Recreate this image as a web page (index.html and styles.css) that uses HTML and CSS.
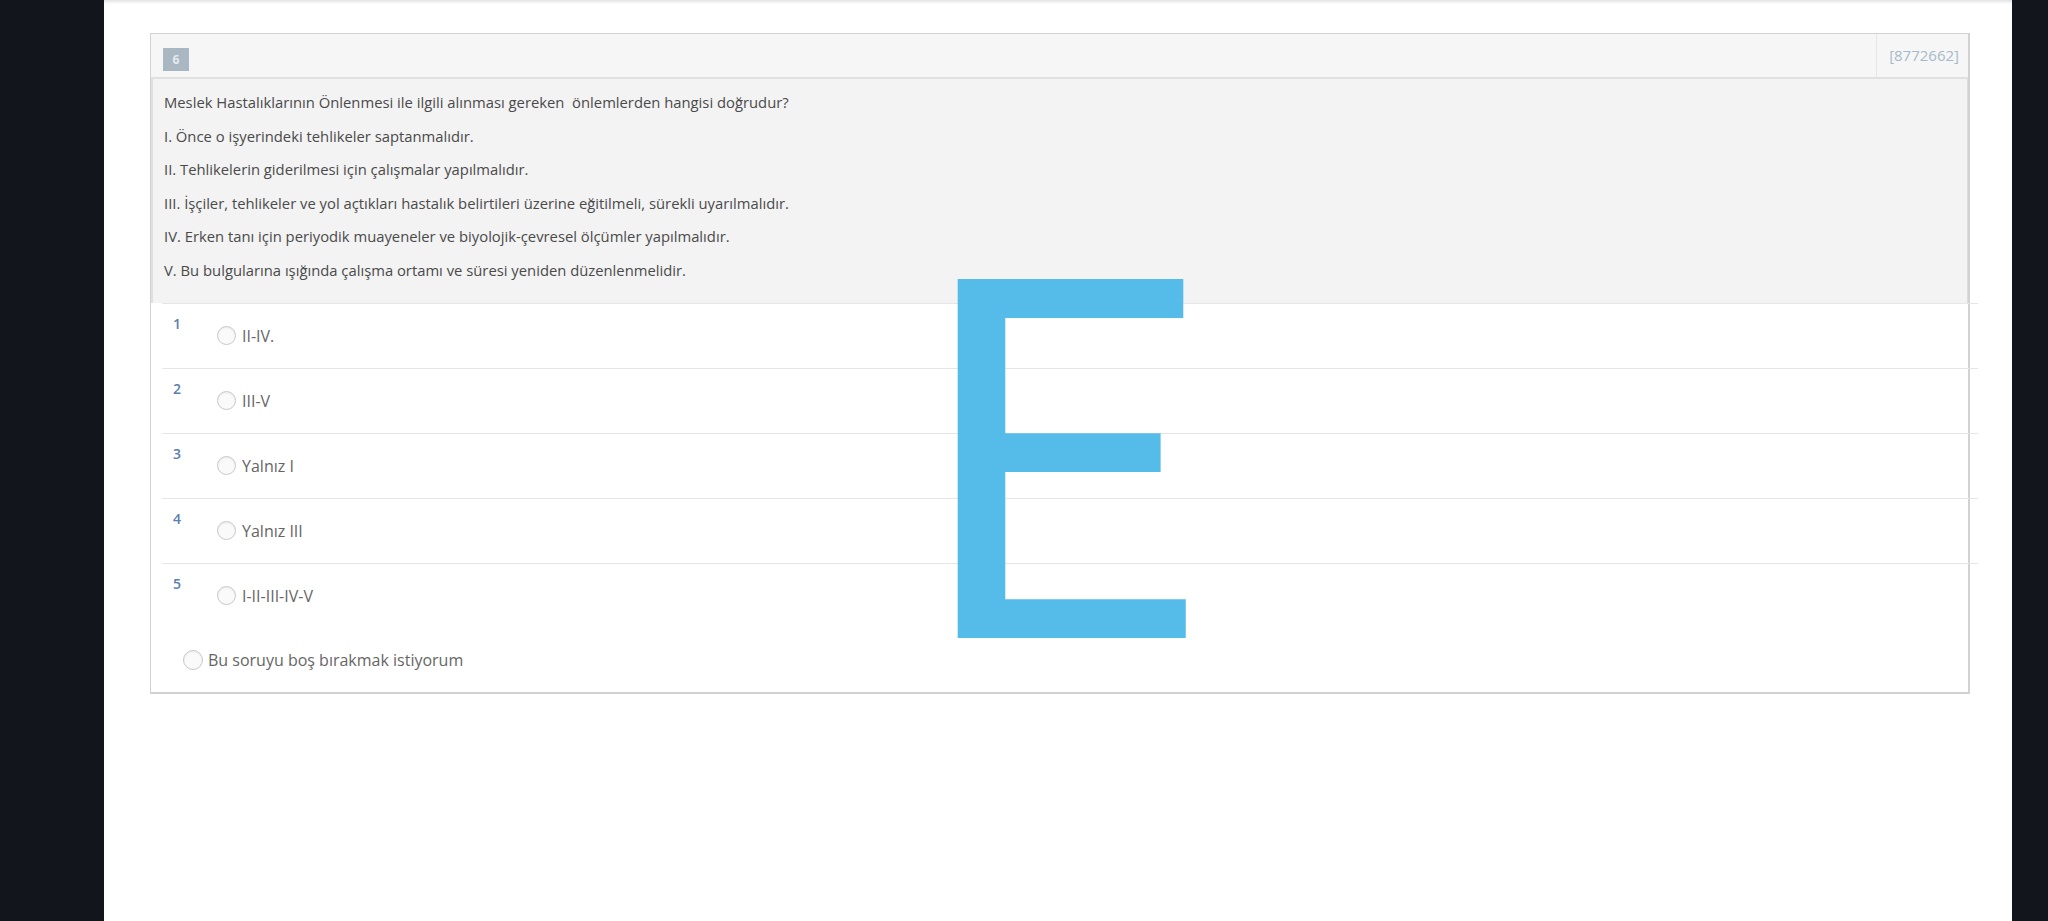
FILE: index.html
```html
<!DOCTYPE html>
<html lang="tr">
<head>
<meta charset="utf-8">
<title>Soru 6</title>
<link rel="stylesheet" href="styles.css">
</head>
<body>
<div class="frame">
  <aside class="side side-left"></aside>
  <main class="content">
    <section class="question-panel">
      <header class="q-head">
        <span class="q-badge">6</span>
        <span class="q-id">[8772662]</span>
      </header>
      <div class="q-body">
        <p>Meslek Hastalıklarının Önlenmesi ile ilgili alınması gereken &nbsp;önlemlerden hangisi doğrudur?</p>
        <p>I. Önce o işyerindeki tehlikeler saptanmalıdır.</p>
        <p>II. Tehlikelerin giderilmesi için çalışmalar yapılmalıdır.</p>
        <p>III. İşçiler, tehlikeler ve yol açtıkları hastalık belirtileri üzerine eğitilmeli, sürekli uyarılmalıdır.</p>
        <p>IV. Erken tanı için periyodik muayeneler ve biyolojik-çevresel ölçümler yapılmalıdır.</p>
        <p>V. Bu bulgularına ışığında çalışma ortamı ve süresi yeniden düzenlenmelidir.</p>
      </div>
      <ol class="options">
        <li class="opt"><span class="opt-num">1</span><label class="choice"><span class="radio"></span>II-IV.</label></li>
        <li class="opt"><span class="opt-num">2</span><label class="choice"><span class="radio"></span>III-V</label></li>
        <li class="opt"><span class="opt-num">3</span><label class="choice"><span class="radio"></span>Yalnız I</label></li>
        <li class="opt"><span class="opt-num">4</span><label class="choice"><span class="radio"></span>Yalnız III</label></li>
        <li class="opt"><span class="opt-num">5</span><label class="choice"><span class="radio"></span>I-II-III-IV-V</label></li>
      </ol>
      <label class="skip"><span class="radio radio-lg"></span>Bu soruyu boş bırakmak istiyorum</label>
    </section>
    <div class="answer-mark">E</div>
  </main>
  <aside class="side side-right"></aside>
</div>
</body>
</html>
```
FILE: styles.css
```css
* { box-sizing: border-box; }

html, body {
  margin: 0;
  padding: 0;
  height: 100%;
  background: #12151c;
}

body {
  font-family: "Open Sans", "Liberation Sans", sans-serif;
  color: #555;
}

.frame {
  display: flex;
  height: 921px;
}

.side { background: #12151c; }
.side-left { width: 104px; flex: 0 0 104px; }
.side-right { width: 36px; flex: 0 0 36px; }

.content {
  position: relative;
  flex: 1 1 auto;
  background: #fff;
  padding: 33px 42px 0 46px;
  background-image: linear-gradient(#e2e2e2, #fff 4px);
}

.question-panel {
  border: 1px solid #d2d2d2;
  border-width: 1px 2px 2px 1px;
  background: #fff;
}

.q-head {
  display: flex;
  justify-content: space-between;
  align-items: stretch;
  height: 45px;
  background: #f6f6f6;
  border-bottom: 2px solid #e0e0e0;
}

.q-badge {
  align-self: flex-start;
  margin: 14px 0 0 12px;
  width: 26px;
  height: 23px;
  background: #a9b7c2;
  color: #e4eaef;
  font-size: 12px;
  font-weight: 700;
  line-height: 23px;
  text-align: center;
}

.q-id {
  border-left: 1px solid #e6e6e6;
  padding: 0 9px 0 12px;
  color: #a6bacb;
  font-size: 15px;
  line-height: 43px;
}

.q-body {
  display: flex;
  flex-direction: column;
  gap: 13.6px;
  padding: 13px 12px 23px 11px;
  background: #f3f3f3;
  border-left: 2px solid #e0e0e0;
  border-right: 1px solid #dcdcdc;
  font-size: 14.8px;
  line-height: 20px;
  color: #4a4a4a;
}

.q-body p { margin: 0; }

.options {
  list-style: none;
  margin: 0 -10px 0 11px;
  padding: 0;
}

.opt {
  display: flex;
  align-items: flex-start;
  height: 65px;
  padding: 11px 0 0 11px;
  border-top: 1px solid #e6e6e6;
}

.opt-num {
  width: 44px;
  color: #5a80ad;
  font-size: 14px;
  font-weight: 600;
  line-height: 18px;
}

.choice {
  display: flex;
  align-items: center;
  margin-top: 10px;
  font-size: 16px;
  line-height: 22px;
  color: #666;
}

.radio {
  display: inline-block;
  flex: 0 0 auto;
  width: 19px;
  height: 19px;
  margin-right: 6px;
  border: 1px solid #c9c9c9;
  border-radius: 50%;
  background: #fafafa;
  box-shadow: inset 0 1px 2px rgba(0, 0, 0, 0.07);
}

.radio-lg {
  width: 20px;
  height: 20px;
  margin-right: 5px;
}

.skip {
  display: flex;
  align-items: center;
  padding: 21px 0 21px 32px;
  font-size: 16px;
  line-height: 22px;
  color: #666;
}

.answer-mark {
  position: absolute;
  left: 812px;
  top: 213px;
  font-family: Roboto, "DejaVu Sans", sans-serif;
  font-size: 505px;
  line-height: 1;
  color: #55bce9;
  pointer-events: none;
}
```
